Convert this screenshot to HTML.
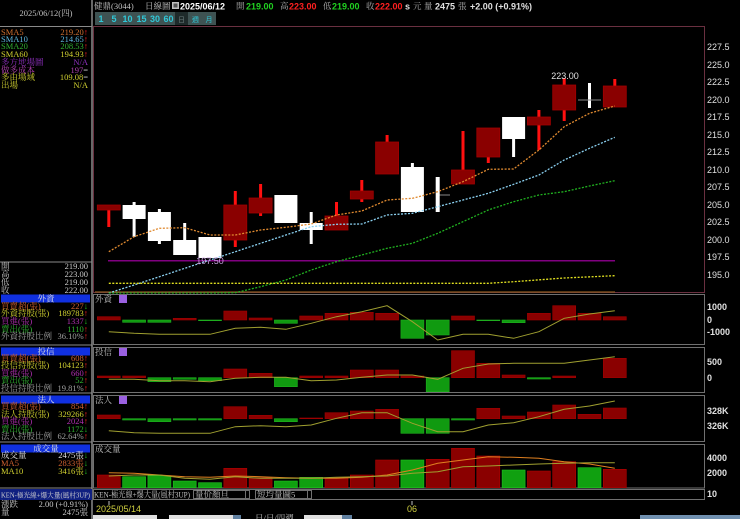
<!DOCTYPE html>
<html><head><meta charset="utf-8"><style>
body{margin:0;background:#000;width:740px;height:519px;overflow:hidden}
svg{display:block}
.s{font-family:"Liberation Serif","Noto Serif CJK TC","WenQuanYi Zen Hei",serif;font-size:8.5px}
.h{font-family:"Liberation Sans","Noto Sans CJK TC",sans-serif;font-size:9px}
</style></head><body>
<svg width="740" height="519" viewBox="0 0 740 519" xmlns="http://www.w3.org/2000/svg">
<defs><clipPath id="sb"><rect x="0" y="0" width="91" height="519"/></clipPath></defs>
<rect width="740" height="519" fill="#000"/>
<line x1="92" y1="0" x2="92" y2="519" stroke="#8a8a8a" stroke-width="1.5"/>
<line x1="0" y1="26.5" x2="92" y2="26.5" stroke="#8a8a8a"/>
<text x="46" y="16" class="s" fill="#c0c0c0" text-anchor="middle">2025/06/12(四)</text>
<g class="s">
<text x="1" y="35" fill="#d07030">SMA5</text><text x="88" y="35" fill="#d07030" text-anchor="end">219.20<tspan fill="#ff2020">↑</tspan></text>
<text x="1" y="42" fill="#60b8e0">SMA10</text><text x="88" y="42" fill="#60b8e0" text-anchor="end">214.65<tspan fill="#ff2020">↑</tspan></text>
<text x="1" y="49" fill="#30b030">SMA20</text><text x="88" y="49" fill="#30b030" text-anchor="end">208.53<tspan fill="#ff2020">↑</tspan></text>
<text x="1" y="57" fill="#d0d030">SMA60</text><text x="88" y="57" fill="#d0d030" text-anchor="end">194.93<tspan fill="#ff2020">↑</tspan></text>
<text x="1" y="65" fill="#9030c0">多方地場圖</text><text x="88" y="65" fill="#9030c0" text-anchor="end">N/A</text>
<text x="1" y="73" fill="#b040b0">做多成本</text><text x="88" y="73" fill="#b040b0" text-anchor="end">197<tspan fill="#ccc">=</tspan></text>
<text x="1" y="80" fill="#d0d030">多由場域</text><text x="88" y="80" fill="#d0d030" text-anchor="end">109.08<tspan fill="#ccc">=</tspan></text>
<text x="1" y="88" fill="#d0d030">出場</text><text x="88" y="88" fill="#d0d030" text-anchor="end">N/A</text>
</g>
<line x1="0" y1="262" x2="92" y2="262" stroke="#8a8a8a"/>
<g class="s" fill="#c8c8c8">
<text x="1" y="269">開</text><text x="88" y="269" text-anchor="end">219.00</text>
<text x="1" y="277">高</text><text x="88" y="277" text-anchor="end">223.00</text>
<text x="1" y="285">低</text><text x="88" y="285" text-anchor="end">219.00</text>
<text x="1" y="293">收</text><text x="88" y="293" text-anchor="end">222.00</text>
</g>
<g class="s">
<rect x="1" y="294.5" width="89" height="8" fill="#1030e0"/><text x="46" y="301.5" fill="#e0e0e0" text-anchor="middle">外資</text>
<text x="1" y="309" fill="#d06030">買賣超(張)</text><text x="88" y="309" fill="#d06030" text-anchor="end">227<tspan fill="#20c020">↓</tspan></text>
<text x="1" y="316" fill="#d0d030">外資持股(張)</text><text x="88" y="316" fill="#d0d030" text-anchor="end">189783<tspan fill="#ff2020">↑</tspan></text>
<text x="1" y="324" fill="#b030b0">買進(張)</text><text x="88" y="324" fill="#b030b0" text-anchor="end">1337<tspan fill="#20c020">↓</tspan></text>
<text x="1" y="332" fill="#30b030">賣出(張)</text><text x="88" y="332" fill="#30b030" text-anchor="end">1110<tspan fill="#ff2020">↑</tspan></text>
<text x="1" y="339" fill="#a0a0a0">外資持股比例</text><text x="88" y="339" fill="#a0a0a0" text-anchor="end">36.10%<tspan fill="#ff2020">↑</tspan></text>
<line x1="0" y1="345" x2="92" y2="345" stroke="#8a8a8a"/>
<rect x="1" y="347.5" width="89" height="8" fill="#1030e0"/><text x="46" y="354.5" fill="#e0e0e0" text-anchor="middle">投信</text>
<text x="1" y="361" fill="#d06030">買賣超(張)</text><text x="88" y="361" fill="#d06030" text-anchor="end">608<tspan fill="#ff2020">↑</tspan></text>
<text x="1" y="368" fill="#d0d030">投信持股(張)</text><text x="88" y="368" fill="#d0d030" text-anchor="end">104123<tspan fill="#ff2020">↑</tspan></text>
<text x="1" y="376" fill="#b030b0">買進(張)</text><text x="88" y="376" fill="#b030b0" text-anchor="end">660<tspan fill="#ff2020">↑</tspan></text>
<text x="1" y="383" fill="#30b030">賣出(張)</text><text x="88" y="383" fill="#30b030" text-anchor="end">52<tspan fill="#ff2020">↑</tspan></text>
<text x="1" y="391" fill="#a0a0a0">投信持股比例</text><text x="88" y="391" fill="#a0a0a0" text-anchor="end">19.81%<tspan fill="#ff2020">↑</tspan></text>
<line x1="0" y1="393" x2="92" y2="393" stroke="#8a8a8a"/>
<rect x="1" y="395.5" width="89" height="8" fill="#1030e0"/><text x="46" y="402.5" fill="#e0e0e0" text-anchor="middle">法人</text>
<text x="1" y="409" fill="#d06030">買賣超(張)</text><text x="88" y="409" fill="#d06030" text-anchor="end">854<tspan fill="#ff2020">↑</tspan></text>
<text x="1" y="417" fill="#d0d030">法人持股(張)</text><text x="88" y="417" fill="#d0d030" text-anchor="end">329266<tspan fill="#ff2020">↑</tspan></text>
<text x="1" y="424" fill="#b030b0">買進(張)</text><text x="88" y="424" fill="#b030b0" text-anchor="end">2024<tspan fill="#ff2020">↑</tspan></text>
<text x="1" y="432" fill="#30b030">賣出(張)</text><text x="88" y="432" fill="#30b030" text-anchor="end">1172<tspan fill="#20c020">↓</tspan></text>
<text x="1" y="439" fill="#a0a0a0">法人持股比例</text><text x="88" y="439" fill="#a0a0a0" text-anchor="end">62.64%<tspan fill="#ff2020">↑</tspan></text>
<line x1="0" y1="442" x2="92" y2="442" stroke="#8a8a8a"/>
<rect x="1" y="444.5" width="89" height="8" fill="#1030e0"/><text x="46" y="451.5" fill="#e0e0e0" text-anchor="middle">成交量</text>
<text x="1" y="458" fill="#e0e0e0">成交量</text><text x="88" y="458" fill="#e0e0e0" text-anchor="end">2475張<tspan fill="#20c020">↓</tspan></text>
<text x="1" y="466" fill="#d06030">MA5</text><text x="88" y="466" fill="#d06030" text-anchor="end">2833張<tspan fill="#20c020">↓</tspan></text>
<text x="1" y="474" fill="#d0d030">MA10</text><text x="88" y="474" fill="#d0d030" text-anchor="end">3416張<tspan fill="#20c020">↓</tspan></text>
<line x1="0" y1="488" x2="92" y2="488" stroke="#8a8a8a"/>
<rect x="0" y="489" width="92" height="11" fill="#102080"/>
<g clip-path="url(#sb)"><text x="1" y="497.5" fill="#d0d0d0" font-size="7" textLength="89" lengthAdjust="spacingAndGlyphs">KEN-極光線+爆大量(風村3UP)</text></g>
<text x="1" y="507" fill="#c8c8c8">漲跌</text><text x="88" y="507" fill="#c8c8c8" text-anchor="end">2.00 (+0.91%)</text>
<text x="1" y="515" fill="#c8c8c8">量</text><text x="88" y="515" fill="#c8c8c8" text-anchor="end">2475張</text>
</g>
<g class="s" font-size="9">
<text x="94" y="9" fill="#c0c0c0">健鼎(3044)</text>
<text x="145" y="9" fill="#c0c0c0">日線圖</text>
</g>
<rect x="172" y="2" width="7" height="7" fill="#c0c0c0"/><rect x="173.5" y="3.5" width="4" height="4" fill="#555"/>
<g class="h" font-weight="bold" font-size="9.5">
<text x="180" y="9.5" fill="#fff">2025/06/12</text>
<text x="246" y="9.5" fill="#20d020">219.00</text>
<text x="289" y="9.5" fill="#ff2020">223.00</text>
<text x="332" y="9.5" fill="#20d020">219.00</text>
<text x="375" y="9.5" fill="#ff2020">222.00</text>
<text x="405" y="9.5" fill="#e0e0e0">s</text>
<text x="435" y="9.5" fill="#e0e0e0">2475</text>
<text x="470" y="9.5" fill="#e0e0e0">+2.00 (+0.91%)</text>
</g>
<g class="s" fill="#b0b0b0" font-size="8.5">
<text x="236" y="9">開</text><text x="280" y="9">高</text><text x="323" y="9">低</text><text x="366" y="9">收</text>
<text x="413" y="9">元</text><text x="424" y="9">量</text><text x="458" y="9">張</text>
</g>
<g class="h" font-size="9" font-weight="bold" fill="#30c8d8" text-anchor="middle">
<rect x="95" y="12" width="121" height="13" fill="#3e5252"/>
<rect x="175" y="12" width="13" height="13" fill="#1e2a2a"/>
<text x="101" y="22">1</text><text x="114" y="22">5</text><text x="127.5" y="22">10</text><text x="141.5" y="22">15</text><text x="155" y="22">30</text><text x="168.5" y="22">60</text>
<text x="181.5" y="22" fill="#6a7a7a" font-weight="normal" font-size="7">日</text><text x="195.5" y="22" font-weight="normal" font-size="7">週</text><text x="209" y="22" font-weight="normal" font-size="7">月</text>
</g>
<rect x="93.5" y="26.5" width="611" height="266" fill="none" stroke="#6a3040"/>
<g class="h" font-size="8.5" fill="#e0e0e0">
<text x="707" y="50">227.5</text><text x="707" y="68">225.0</text><text x="707" y="85">222.5</text><text x="707" y="103">220.0</text>
<text x="707" y="120">217.5</text><text x="707" y="138">215.0</text><text x="707" y="155">212.5</text><text x="707" y="173">210.0</text>
<text x="707" y="190">207.5</text><text x="707" y="208">205.0</text><text x="707" y="225">202.5</text><text x="707" y="243">200.0</text>
<text x="707" y="260">197.5</text><text x="707" y="278">195.0</text>
</g>
<line x1="108" y1="260.7" x2="615" y2="260.7" stroke="#800080" stroke-width="1.5"/>
<line x1="95" y1="292" x2="615" y2="292" stroke="#8a5a20" stroke-width="1.2"/>
<g stroke="#ff1010" stroke-width="3">
<line x1="108.8" y1="205" x2="108.8" y2="227"/>
<line x1="235.3" y1="191" x2="235.3" y2="247"/>
<line x1="260.6" y1="184" x2="260.6" y2="216"/>
<line x1="336.5" y1="202" x2="336.5" y2="216"/>
<line x1="361.8" y1="180" x2="361.8" y2="202"/>
<line x1="387.1" y1="135" x2="387.1" y2="142"/>
<line x1="463" y1="131" x2="463" y2="170"/>
<line x1="488.3" y1="157" x2="488.3" y2="163"/>
<line x1="538.9" y1="110" x2="538.9" y2="150"/>
<line x1="564.2" y1="78" x2="564.2" y2="121"/>
<line x1="614.8" y1="79" x2="614.8" y2="86"/>
</g>
<g stroke="#fff" stroke-width="3">
<line x1="134.1" y1="202" x2="134.1" y2="237"/>
<line x1="159.4" y1="209" x2="159.4" y2="244"/>
<line x1="184.7" y1="223" x2="184.7" y2="240"/>
<line x1="311.2" y1="212" x2="311.2" y2="244"/>
<line x1="412.4" y1="163" x2="412.4" y2="167"/>
<line x1="513.6" y1="139" x2="513.6" y2="157"/>
<line x1="589.5" y1="83" x2="589.5" y2="108"/>
</g>
<line x1="437" y1="195" x2="450" y2="195" stroke="#888"/>
<line x1="578" y1="100" x2="601" y2="100" stroke="#888"/>
<g fill="#8a0000" stroke="#a00000" stroke-width="0.8">
<rect x="97.3" y="205" width="23" height="5"/>
<rect x="223.8" y="205" width="23" height="35"/>
<rect x="249.1" y="198" width="23" height="15"/>
<rect x="325" y="216" width="23" height="14"/>
<rect x="350.3" y="191" width="23" height="8"/>
<rect x="375.6" y="142" width="23" height="32"/>
<rect x="451.5" y="170" width="23" height="14"/>
<rect x="476.8" y="128" width="23" height="29"/>
<rect x="527.4" y="117" width="23" height="8"/>
<rect x="552.7" y="85" width="23" height="25"/>
<rect x="603.3" y="86" width="23" height="21"/>
</g>
<g fill="#fff">
<rect x="122.6" y="205" width="23" height="14"/>
<rect x="147.9" y="212" width="23" height="29"/>
<rect x="173.2" y="240" width="23" height="15"/>
<rect x="198.5" y="237" width="23" height="21"/>
<rect x="274.4" y="195" width="23" height="28"/>
<rect x="299.7" y="223" width="23" height="7"/>
<rect x="400.9" y="167" width="23" height="45"/>
<rect x="435.7" y="177" width="4" height="35"/>
<rect x="502.1" y="117" width="23" height="22"/>
</g>
<g fill="none" stroke-width="1.3" stroke-dasharray="2 1.5">
<polyline stroke="#e08a30" points="108.8,251.7 134.1,236.7 159.4,228.3 184.7,227.7 210,235 235.3,235 260.6,230 285.9,227.3 311.2,224 336.5,215 361.8,211 387.1,200 412.4,198.3 437.7,191.7 463,181.7 488.3,169.3 513.6,169 538.9,150 564.2,126.7 589.5,113.3 614.8,106"/>
<polyline stroke="#8ad0f0" points="108.8,293 134.1,285 159.4,276.7 184.7,268.3 210,260 235.3,251.7 260.6,243.3 285.9,235 311.2,226.7 336.5,224.3 361.8,224 387.1,215 412.4,213.3 437.7,206.7 463,200 488.3,193.3 513.6,184.3 538.9,175 564.2,160 589.5,148.3 614.8,137.3"/>
<polyline stroke="#20b020" points="108.8,293 134.1,293 159.4,293 184.7,293 210,293 235.3,292.7 260.6,286.7 285.9,280 311.2,270 336.5,261.7 361.8,255 387.1,248.3 412.4,243.3 437.7,233.3 463,221.7 488.3,210 513.6,201.7 538.9,195 564.2,191.7 589.5,186 614.8,180.7"/>
<polyline stroke="#e0e020" points="108.8,283.3 488.3,283.3 513.6,281.7 564.2,278 614.8,275.7"/>
</g>
<text x="210" y="264" class="h" font-size="8.5" fill="#c8a0e0" text-anchor="middle">197.50</text>
<text x="565" y="79" class="h" font-size="8.5" fill="#e0e0e0" text-anchor="middle">223.00</text>
<g fill="none" stroke="#707070">
<rect x="93.5" y="294.5" width="611" height="50"/>
<rect x="93.5" y="347.5" width="611" height="45"/>
<rect x="93.5" y="395.5" width="611" height="46"/>
<rect x="93.5" y="444.5" width="611" height="43.5"/>
<rect x="93.5" y="489.5" width="611" height="10"/>
</g>
<g class="s" font-size="8" fill="#c0c0c0">
<text x="95" y="302">外資</text><text x="95" y="355">投信</text><text x="95" y="403">法人</text><text x="95" y="452">成交量</text>
</g>
<g fill="#9a60e0"><rect x="119" y="295" width="8" height="8"/><rect x="119" y="348" width="8" height="8"/><rect x="119" y="396" width="8" height="8"/></g>
<g class="h" font-size="8.5" fill="#e0e0e0" font-weight="bold">
<text x="707" y="310">1000</text><text x="707" y="323">0</text><text x="707" y="335">-1000</text>
<text x="707" y="365">500</text><text x="707" y="381">0</text>
<text x="707" y="414">328K</text><text x="707" y="429">326K</text>
<text x="707" y="461">4000</text><text x="707" y="476">2000</text><text x="707" y="497">10</text>
</g>
<g fill="#8a0000" stroke="#a00000" stroke-width="0.6">
<rect x="97.3" y="316.7" width="23" height="3.3"/><rect x="173.2" y="318.3" width="23" height="1.7"/>
<rect x="223.8" y="311" width="23" height="9"/><rect x="249.1" y="318" width="23" height="2"/>
<rect x="299.7" y="316" width="23" height="4"/><rect x="325" y="313.3" width="23" height="6.7"/>
<rect x="350.3" y="312.3" width="23" height="7.7"/><rect x="375.6" y="313.3" width="23" height="6.7"/>
<rect x="451.5" y="316" width="23" height="4"/><rect x="527.4" y="313.3" width="23" height="6.7"/>
<rect x="552.7" y="305.7" width="23" height="14.3"/><rect x="578" y="313.3" width="23" height="6.7"/>
<rect x="603.3" y="316.7" width="23" height="3.3"/>
</g>
<g fill="#109a10" stroke="#20b020" stroke-width="0.6">
<rect x="122.6" y="320" width="23" height="2.3"/><rect x="147.9" y="320" width="23" height="2.3"/>
<rect x="198.5" y="320" width="23" height="0.7"/><rect x="274.4" y="320" width="23" height="3.3"/>
<rect x="400.9" y="320" width="23" height="18.3"/><rect x="426.2" y="320" width="23" height="15"/>
<rect x="476.8" y="320" width="23" height="0.7"/><rect x="502.1" y="320" width="23" height="2.7"/>
</g>
<polyline fill="none" stroke="#a0a030" stroke-width="1" points="108.8,331.7 134.1,333.3 159.4,334.3 184.7,334.3 210,334.3 235.3,328.3 260.6,327.3 285.9,329.3 311.2,323.3 336.5,316.7 361.8,311.7 387.1,305.7 412.4,321.7 437.7,340 463,334.3 488.3,334.3 513.6,338.3 538.9,331.7 564.2,318.3 589.5,314 614.8,310.7"/>
<g fill="#8a0000" stroke="#a00000" stroke-width="0.6">
<rect x="97.3" y="376" width="23" height="1.7"/><rect x="122.6" y="376" width="23" height="1.7"/>
<rect x="223.8" y="369" width="23" height="8.7"/><rect x="249.1" y="373.3" width="23" height="4.4"/>
<rect x="299.7" y="376" width="23" height="1.7"/><rect x="325" y="376" width="23" height="1.7"/>
<rect x="350.3" y="370" width="23" height="7.7"/><rect x="375.6" y="370" width="23" height="7.7"/>
<rect x="400.9" y="376" width="23" height="1.7"/><rect x="451.5" y="350.7" width="23" height="27"/>
<rect x="476.8" y="363.3" width="23" height="14.4"/><rect x="502.1" y="375" width="23" height="2.7"/>
<rect x="552.7" y="376" width="23" height="1.7"/><rect x="603.3" y="358.3" width="23" height="19.4"/>
</g>
<g fill="#109a10" stroke="#20b020" stroke-width="0.6">
<rect x="147.9" y="377.7" width="23" height="4"/><rect x="173.2" y="377.7" width="23" height="1.6"/>
<rect x="198.5" y="377.7" width="23" height="3"/><rect x="274.4" y="377.7" width="23" height="9"/>
<rect x="426.2" y="377.7" width="23" height="14"/><rect x="527.4" y="377.7" width="23" height="1.3"/>
</g>
<polyline fill="none" stroke="#a0a030" stroke-width="1" points="108.8,379.3 134.1,379.3 159.4,380.7 184.7,380.7 210,381.7 235.3,378.3 260.6,377.3 285.9,377.3 311.2,380.7 336.5,380 361.8,377.3 387.1,375 412.4,375 437.7,379.3 463,368.3 488.3,364 513.6,363.3 538.9,363.3 564.2,363.3 589.5,360 614.8,356.7"/>
<g fill="#8a0000" stroke="#a00000" stroke-width="0.6">
<rect x="97.3" y="415" width="23" height="3.7"/><rect x="223.8" y="406.7" width="23" height="12"/>
<rect x="249.1" y="415.3" width="23" height="3.4"/><rect x="299.7" y="418" width="23" height="0.7"/>
<rect x="325" y="412.7" width="23" height="6"/><rect x="350.3" y="411" width="23" height="7.7"/>
<rect x="375.6" y="409.3" width="23" height="9.4"/><rect x="476.8" y="408.3" width="23" height="10.4"/>
<rect x="502.1" y="416" width="23" height="2.7"/><rect x="527.4" y="412" width="23" height="6.7"/>
<rect x="552.7" y="405" width="23" height="13.7"/><rect x="578" y="414.3" width="23" height="4.4"/>
<rect x="603.3" y="408" width="23" height="10.7"/>
</g>
<g fill="#109a10" stroke="#20b020" stroke-width="0.6">
<rect x="122.6" y="418.7" width="23" height="1.3"/><rect x="147.9" y="418.7" width="23" height="3"/>
<rect x="173.2" y="418.7" width="23" height="1.3"/><rect x="198.5" y="418.7" width="23" height="1.3"/>
<rect x="274.4" y="418.7" width="23" height="3"/><rect x="400.9" y="418.7" width="23" height="14.6"/>
<rect x="426.2" y="418.7" width="23" height="14.6"/><rect x="451.5" y="418.7" width="23" height="1.3"/>
</g>
<polyline fill="none" stroke="#a0a030" stroke-width="1" points="108.8,430.7 134.1,432.7 159.4,433.3 184.7,433.3 210,433.3 235.3,426.7 260.6,425.7 285.9,426.7 311.2,425 336.5,418.3 361.8,412.7 387.1,412.7 412.4,423.3 437.7,431.7 463,431.7 488.3,425 513.6,422.7 538.9,416.7 564.2,409.3 589.5,406 614.8,401"/>
<g fill="#8a0000" stroke="#b00000" stroke-width="0.6">
<rect x="97.3" y="475" width="23" height="12.7"/><rect x="223.8" y="468.3" width="23" height="19.4"/>
<rect x="249.1" y="477.7" width="23" height="10"/><rect x="325" y="477.7" width="23" height="10"/>
<rect x="350.3" y="475" width="23" height="12.7"/><rect x="375.6" y="460" width="23" height="27.7"/>
<rect x="426.2" y="459.3" width="23" height="28.4"/><rect x="451.5" y="448.3" width="23" height="39.4"/>
<rect x="476.8" y="456" width="23" height="31.7"/><rect x="527.4" y="471" width="23" height="16.7"/>
<rect x="552.7" y="461.7" width="23" height="26"/><rect x="603.3" y="469.3" width="23" height="18.4"/>
</g>
<g fill="#10a010" stroke="#20c020" stroke-width="0.6">
<rect x="122.6" y="476.7" width="23" height="11"/><rect x="147.9" y="475.7" width="23" height="12"/>
<rect x="173.2" y="481" width="23" height="6.7"/><rect x="198.5" y="482.7" width="23" height="5"/>
<rect x="274.4" y="481" width="23" height="6.7"/><rect x="299.7" y="477.3" width="23" height="10.4"/>
<rect x="400.9" y="460" width="23" height="27.7"/><rect x="502.1" y="470" width="23" height="17.7"/>
<rect x="578" y="467.7" width="23" height="20"/>
</g>
<polyline fill="none" stroke="#e08020" stroke-width="1" points="108.8,472.7 134.1,473.3 159.4,475 184.7,476.7 210,477.3 235.3,476 260.6,476.7 285.9,477.7 311.2,478.3 336.5,478.3 361.8,477.3 387.1,475 412.4,470 437.7,463.3 463,460 488.3,456.7 513.6,457.3 538.9,458.3 564.2,461.7 589.5,464 614.8,468.3"/>
<polyline fill="none" stroke="#a0a030" stroke-width="1" points="108.8,476 134.1,475 159.4,475 184.7,478.3 210,479.3 235.3,476.7 260.6,478.3 285.9,478.3 311.2,478.3 336.5,477.3 361.8,476.7 387.1,476 412.4,473.3 437.7,471.7 463,466.7 488.3,466 513.6,465 538.9,464 564.2,463.3 589.5,462.7 614.8,462.7"/>
<text x="94" y="497.5" class="s" font-size="7" fill="#c0c0c0" textLength="96" lengthAdjust="spacingAndGlyphs">KEN-極光線+爆大量(風村3UP)</text>
<rect x="193.5" y="490.5" width="52" height="8" fill="#000" stroke="#707070"/><text x="195" y="497.5" class="s" font-size="7" fill="#c0c0c0">量价顏旦</text>
<rect x="245.5" y="490.5" width="4" height="8" fill="none" stroke="#707070"/>
<rect x="255.5" y="490.5" width="52" height="8" fill="#000" stroke="#707070"/><text x="257" y="497.5" class="s" font-size="7" fill="#c0c0c0">短均量圖5</text>
<rect x="307.5" y="490.5" width="4" height="8" fill="none" stroke="#707070"/>
<line x1="109" y1="501" x2="109" y2="505" stroke="#c0c0c0"/>
<line x1="412" y1="501" x2="412" y2="505" stroke="#c0c0c0"/>
<text x="96" y="512" class="h" font-size="8.5" fill="#d0d040">2025/05/14</text>
<text x="407" y="512" class="h" font-size="8.5" fill="#d0d040">06</text>
<rect x="93" y="515" width="64" height="4" fill="#e0e0e0"/>
<rect x="169" y="515" width="64" height="4" fill="#e0e0e0"/><rect x="233" y="515" width="8" height="4" fill="#6080a0"/>
<text x="255" y="521" class="s" font-size="6.5" fill="#c0c0c0">日/日/四週</text>
<rect x="304" y="515" width="46" height="4" fill="#e0e0e0"/><rect x="342" y="515" width="10" height="4" fill="#6080a0"/>
<rect x="640" y="515" width="100" height="4" fill="#7090b0"/>
</svg>
</body></html>
